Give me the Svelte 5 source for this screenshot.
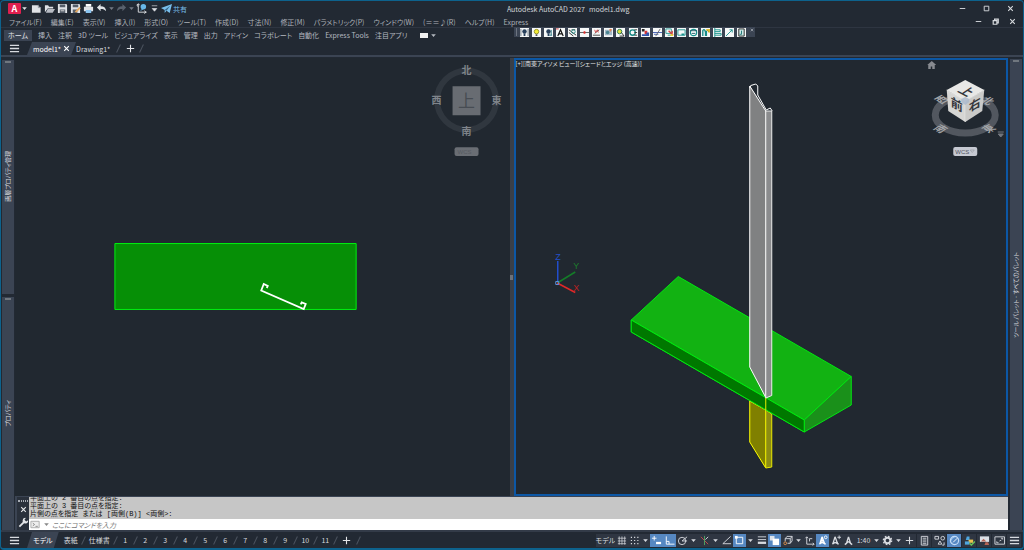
<script>
    const menus = ["ファイル(F)", "編集(E)", "表示(V)", "挿入(I)", "形式(O)", "ツール(T)", "作成(D)", "寸法(N)", "修正(M)", "パラメトリック(P)", "ウィンドウ(W)", "(＝＝♪(R)", "ヘルプ(H)", "Express"];
    const ribbonTabs = ["ホーム", "挿入", "注釈", "3D ツール", "ビジュアライズ", "表示", "管理", "出力", "アドイン", "コラボレート", "自動化", "Express Tools", "注目アプリ"];
    const layouts = ["表紙", "仕様書", "1", "2", "3", "4", "5", "6", "7", "8", "9", "10", "11"];

    // icon bodies on a 12 x 12 grid, currentColor is the light grey of the bars
    const icons = {
        fresh: '<path d="M1 2.500h6.500l3 3v5h-9.500z" fill="currentColor"/><path d="M8 2v3h3" fill="none" stroke="#8b9099"/>',
        open: '<path d="M1 10V2.500h3.500l1 1.500H10v2H4z" fill="currentColor"/><path d="M4 6.500h8L9.500 10.500H2z" fill="#b8bcc4"/>',
        save: '<path d="M1 1h9l1 1v9H1z" fill="currentColor"/><path d="M3 1.500h6v3H3zM3 7h6v4H3z" fill="#555d69"/><path d="M4 8.500h4" stroke="#ddd"/>',
        saveas: '<path d="M1 1h9l1 1v9H1z" fill="currentColor"/><path d="M3 1.500h6v3H3zM3 7h5v4H3z" fill="#555d69"/><path d="M6 10l5-5" stroke="#e5a85d" stroke-width="2"/>',
        print: '<path d="M3 1h6v3H3z" fill="#fff"/><path d="M1 4h10v5H1z" fill="currentColor"/><path d="M3 7.500h6v3.500H3z" fill="#8ac4f0"/>',
        undo: '<path d="M1 5l4-4v2.500c4 0 6 2 6 5.500-1.500-2-3-2.500-6-2.500V9z" fill="currentColor"/>',
        redo: '<path d="M11 5L7 1v2.500C3 3.500 1 5.500 1 9c1.500-2 3-2.500 6-2.500V9z" fill="#59616d"/>',
        view: '<path d="M2.500 1v9h9M2 4l-1-2 1.500-1L4 2M9 8.500l2 1.500-2 1.500" fill="none" stroke="currentColor"/><circle cx="8" cy="4" r="3" fill="#68b7e8"/><path d="M5 8l3-1.500" stroke="#68b7e8"/>',
        plane: '<path d="M0 5.500L12 1 9.500 11 6 8.500 4 11V7.500z" fill="#78bdea"/><path d="M4 7.500L10 3 6 8.500" fill="#356384"/>',
        caret: '<path d="M3.500 4.500h5L6 7.500z" fill="currentColor"/>',
        custom: '<path d="M3 3h6M3.500 6h5L6 9z" fill="currentColor" stroke="currentColor" stroke-width=".7"/>',
        bars: '<path d="M1 2.500h10M1 6h10M1 9.500h10" stroke="currentColor" stroke-width="1.400"/>',
        plus: '<path d="M6 2v8M2 6h8" stroke="currentColor" stroke-width="1.200"/>',
        min: '<path d="M3 6h6" stroke="currentColor"/>',
        max: '<path d="M3.500 3.500h5v5h-5z" fill="none" stroke="currentColor"/>',
        restore: '<path d="M3.500 5h4v4h-4zM5 5V3.500h4v4H7.500" fill="none" stroke="currentColor" stroke-width="1.300"/>',
        close: '<path d="M3.500 3.500l5 5M8.500 3.500l-5 5" stroke="currentColor" stroke-width="1.200"/>',
        wrench: '<path d="M1.500 10.500L7 5" stroke="currentColor" stroke-width="2"/><path d="M11 3.500L9 5 7 3l1.500-2a3 3 0 1 0 2.500 2.500" fill="currentColor"/>',
        prompt: '<path d="M1 2.500h9v7H1z" fill="#eee" stroke="#aaa"/><path d="M3 4.500l2 1.500-2 1.500M6 8h2.500" fill="none" stroke="#888"/>',
        grid: '<path d="M3.500 1.500v9M6.500 1.500v9M9.500 1.500v9M2 3.500h9M2 6.500h9M2 9.500h9" stroke="currentColor" stroke-width=".8"/>',
        dots: '<path d="M2 2.500h9M2 6h9M2 9.500h9" stroke="currentColor" stroke-width="1.300" stroke-dasharray="1.300 2.200"/>',
        dyn: '<path d="M3.500 1v5M1 3.500h5" stroke="currentColor"/><path d="M5.500 7.500H11v2.500H5.500z" fill="currentColor"/>',
        ortho: '<path d="M2.500 1.500v8.500h9M2.500 7h3v3" fill="none" stroke="currentColor"/>',
        polar: '<circle cx="5.500" cy="6.500" r="4" fill="none" stroke="currentColor"/><path d="M11 2L5.500 6.500H11" fill="none" stroke="currentColor"/>',
        iso: '<path d="M2 2l8 8" stroke="#c84b4b"/><path d="M6 1v10" stroke="#51a766"/><path d="M7 5l3-3" stroke="currentColor"/>',
        angle: '<path d="M10.500 1.500L2 9.500h9" fill="none" stroke="currentColor"/>',
        osnap: '<path d="M2.500 2.500h7v7h-7z" fill="none" stroke="currentColor"/><path d="M1 1h3v3H1z" fill="currentColor"/>',
        weight: '<path d="M2 2h9M2 5h9" stroke="currentColor"/><path d="M2 8.500h9" stroke="currentColor" stroke-width="2.500"/>',
        cycle: '<path d="M1 1h5v5H1z" fill="#dde3ea"/><path d="M4 4h7v7H4z" fill="currentColor"/>',
        cube: '<path d="M3.500 4l2-2.500H11v5L9 9H6M3.500 7V4H9v5M9 4l2-2.500" fill="none" stroke="currentColor"/><circle cx="3.500" cy="9" r="1.500" fill="none" stroke="#df914c"/>',
        ucs: '<path d="M3 2v8h8M1.500 3.500L3 2l1.500 1.500M9.500 8.500L11 10l-1.500 1.500M6 7V4h3" fill="none" stroke="currentColor"/>',
        anno: '<path d="M5.500 2L3 10M5.500 2L8.500 10M5.500 5v3L2.500 10M5.500 8l4 2" stroke="currentColor" stroke-width="1.500"/><circle cx="9.500" cy="2.500" r="1.500" fill="none" stroke="currentColor"/>',
        annoadd: '<path d="M5.500 2L3 10M5.500 2L8.500 10M5.500 8l-3 2M5.500 8l4 2" stroke="currentColor" stroke-width="1.500"/><path d="M8 2.500h4M10 .5v4" stroke="currentColor"/>',
        annoscale: '<path d="M6 2L3.500 10M6 2L8.500 10M6 7l-4 3.500M6 7l4 3.500" stroke="currentColor" stroke-width="1.500"/>',
        gear: '<circle cx="6" cy="6" r="3" fill="none" stroke="currentColor" stroke-width="2"/><circle cx="6" cy="6" r="4.500" fill="none" stroke="currentColor" stroke-width="1.500" stroke-dasharray="1.800 1.730"/>',
        list: '<path d="M2.500 1.500h7v9.500h-7zM4 3.500h4M4 5.500h4M4 7.500h4M4 9.500h4" fill="none" stroke="currentColor"/>',
        shapes: '<path d="M1 1.500h4v3H1z" fill="none" stroke="currentColor"/><circle cx="9.500" cy="3.500" r="2" fill="none" stroke="currentColor"/><path d="M4.500 10l2-3.500 2 3.500zM9 11h2V8" fill="none" stroke="currentColor"/>',
        gauge: '<circle cx="6" cy="6" r="4.500" fill="none" stroke="#c4dcf6" stroke-width="1.300"/><path d="M4.500 8L9 3.500" stroke="currentColor"/><path d="M2.500 6A3.500 3.500 0 0 1 6 2.500" fill="none" stroke="#a6d0f7"/>',
        print3d: '<path d="M3 1.500h3v4H2z" fill="#4fa7df"/><path d="M5 5h5v3.500H5z" fill="#eac14f"/><path d="M1 7h5v3.500H1z" fill="#4fa7df"/><path d="M6 9l2 2 4-4" fill="none" stroke="#65bf59" stroke-width="1.500"/>',
        picture: '<path d="M1 1.500h10v6H1z" fill="#dbe0e7"/><path d="M2 7l3-3 3 3M6 11l1-3h3l1 3z" fill="#b66455"/>',
        full: '<path d="M1 2h10.500v8H1z" fill="none" stroke="currentColor"/><path d="M3 7v1.500h2M9.500 5V3.500H7.500M6 6.500l2-1" fill="none" stroke="currentColor"/>'
    };

    const quick = ["fresh", "open", "save", "saveas", "print", "undo", "caret", "redo", "caret", "view", "custom"];
    const drafting = ["grid", "dots", "caret", "dyn*", "ortho*", "polar", "caret", "iso", "caret", "angle", "osnap*", "caret", "weight", "cycle*", "cube", "caret", "ucs", "anno*", "annoadd", "annoscale"]
        .map((s) => ({ name: s.replace("*", ""), on: s.endsWith("*") }));
    const display = ["list", "shapes", "gauge*", "print3d", "picture", "full", "bars"]
        .map((s) => ({ name: s.replace("*", ""), on: s.endsWith("*") }));

    const bulb = '<circle cx="5" cy="4" r="2.500" fill="#28405c"/><path d="M5 6v3" stroke="#28405c" stroke-width="2"/>';
    const tools = [
        bulb + '<path d="M1 1v8M9 1v8" stroke="#687480"/>',
        '<circle cx="5" cy="4" r="2.500" fill="#f5ee35" stroke="#948d23"/><path d="M5 7v2" stroke="#555" stroke-width="2"/>',
        bulb + '<path d="M8 2v6M6 8h3" stroke="#247480"/>',
        '<path d="M2 9L5 2l3 7M3 6.500h4" fill="none" stroke="#111" stroke-width="1.300"/><path d="M0 1h3" stroke="#c33"/>',
        '<path d="M1 2l8 6M1 5l5 4M4 2h4" stroke="#222"/><circle cx="6" cy="4" r="2" fill="none" stroke="#218c87"/>',
        '<path d="M0 5h10" stroke="#555"/><path d="M4 3.500h2v3H4z" fill="#e32d2d"/>',
        '<path d="M1 8h8M3 6l5-4" stroke="#444"/><path d="M3 2l1 3 2-3 1 3" fill="none" stroke="#d54343"/>',
        '<path d="M1 2h8v6H1z" fill="#a4b9c7"/><circle cx="4" cy="5" r="2" fill="#4a8491"/><path d="M7 1v3M6 2h3" stroke="#e7763b"/>',
        '<circle cx="4" cy="4" r="2.500" fill="#dfe33e" stroke="#277c55"/><path d="M6 5l3 4H4" fill="none" stroke="#222"/>',
        '<circle cx="4" cy="5" r="3" fill="none" stroke="#158984" stroke-width="1.500"/><path d="M6 2h3M6 5h3M6 8h3" stroke="#333"/>',
        '<path d="M1 1h3v3H1z" fill="#222"/><path d="M4 3h3v4H4z" fill="#db3434"/><path d="M6 5h3v4H1V7h5z" fill="#3454ab"/>',
        '<path d="M0 5h10M1 7h5" stroke="#3d59af"/><path d="M8 1L3 9" stroke="#666"/>',
        '<path d="M1 1h6v5H1zM3 8h4" fill="none" stroke="#249792"/><path d="M4 3l5 5M8 3v3" stroke="#d54141" stroke-width="1.500"/><path d="M6 7h3v2H6z" fill="#e7d432"/>',
        '<path d="M1 2h8v6H1z" fill="none" stroke="#16918c"/><path d="M5 7h3" stroke="#16918c" stroke-width="2"/>',
        '<circle cx="5" cy="5" r="3.500" fill="none" stroke="#16918c" stroke-width="1.300"/><path d="M1 3h8M3 6h4" stroke="#225a66"/>',
        '<path d="M2 9V3q2-3 3 2v4M6 3v6" fill="none" stroke="#168c88" stroke-width="1.500"/><path d="M6 2h3v3" stroke="#e5c12e" stroke-width="2"/>',
        '<path d="M2 0v10M2 2h6v2H2M2 6h7v2H2" fill="none" stroke="#138e88"/>',
        '<path d="M1 9L8 2M5 2h3v3" fill="none" stroke="#168f8b"/>',
        '<path d="M2 1h6v8H2z" fill="#cce8e6" stroke="#222"/><path d="M5 3v4H3" fill="none" stroke="#15716f"/>'
    ];
</script>

{#snippet icon(name)}
    <svg class="icon" viewBox="0 0 12 12" aria-hidden="true">{@html icons[name]}</svg>
{/snippet}

<div class="window">
    <header>
        <div class="titlebar">
            <div class="quick">
                <button class="logo" aria-label="Application menu">A</button>
                <button class="arrow" aria-label="Application options">{@render icon("caret")}</button>
                {#each quick as name}
                    <button class:arrow={name === "caret"} class:dim={name === "caret"} aria-label={name}>{@render icon(name)}</button>
                {/each}
                <button class="share">{@render icon("plane")}共有</button>
            </div>
            <div class="title"><span>Autodesk AutoCAD 2027</span><span>model1.dwg</span></div>
            <div class="controls">
                {#each ["min", "max", "close"] as name}
                    <button aria-label={name}>{@render icon(name)}</button>
                {/each}
            </div>
        </div>

        <div class="menubar">
            <nav>
                {#each menus as menu}<button>{menu}</button>{/each}
            </nav>
            <div class="controls inner">
                {#each ["min", "restore", "close"] as name}
                    <button aria-label={name}>{@render icon(name)}</button>
                {/each}
            </div>
        </div>

        <div class="ribbon">
            {#each ribbonTabs as tab, i}<button class:current={i === 0}>{tab}</button>{/each}
            <button class="panel" aria-label="Ribbon display"><i></i>{@render icon("caret")}</button>
        </div>

        <div class="toolbar">
            <span class="handle"></span>
            {#each tools as tool, i}
                <button aria-label="Express tool {i + 1}"><svg viewBox="0 0 10 10">{@html tool}</svg></button>
            {/each}
            <button class="shut" aria-label="Close toolbar">{@render icon("close")}</button>
        </div>

        <div class="files">
            <button class="burger" aria-label="Drawings">{@render icon("bars")}</button>
            <button class="tab active"><span>model1*</span>{@render icon("close")}</button>
            <button class="tab drawing">Drawing1*</button>
            <i class="slash"></i>
            <button class="new" aria-label="New drawing">{@render icon("plus")}</button>
            <i class="slash"></i>
        </div>
    </header>

    <main>
        <aside class="left">
            <section><span>画層プロパティ管理</span></section>
            <section><span>プロパティ</span></section>
        </aside>

        <div class="work">
            <div class="views">
                <div class="view">
                    <svg viewBox="15 58 495 438" role="img" aria-label="Top view">
                        <path d="M115 243.500h241.500v66H115z" fill="#068f06" stroke="#00f010" />
                        <path d="M267 288l1-2-4-2-2.500 6.500 42.500 18.500 2-5-4-1.500-1 2" fill="none" stroke="#fff" stroke-width="1.800" />
                        <circle cx="467" cy="100" r="29.500" fill="none" stroke="#30373f" stroke-width="6" />
                        <path d="M453 86h28v29h-28z" fill="#686c72" />
                        <g class="compass">
                            <text x="467" y="74">北</text>
                            <text x="467" y="135">南</text>
                            <text x="437" y="104">西</text>
                            <text x="497" y="104">東</text>
                        </g>
                        <text class="top" x="467" y="107">上</text>
                        <rect x="455" y="147" width="24" height="9" rx="2" fill="#6a6e74" />
                        <text class="wcs off" x="458" y="154">WCS</text>
                    </svg>
                </div>
                <div class="splitter"><i></i></div>
                <div class="view focused">
                    <svg viewBox="516 60 490 434" role="img" aria-label="Southeast isometric view">
                        <g stroke="#00e810" stroke-width="1" stroke-linejoin="round">
                            <path d="M678 276.500l173 100-47 43.500-173-100z" fill="#12b212" />
                            <path d="M631 320l173 100v12L631 332z" fill="#007800" />
                            <path d="M804 420l47-43.500V405l-47 27z" fill="#1a901a" />
                        </g>
                        <path d="M749.500 401l16 9v58l-16-26z" fill="#808000" stroke="#ff0" />
                        <path d="M765.500 410l6 4v53l-6 1z" fill="#8c8c14" stroke="#e8e800" />
                        <path d="M804 420v12L631 332v-12z" fill="#007800" stroke="#00e810" stroke-linejoin="round" />
                        <path d="M765.500 398v12" stroke="#e8f000" />
                        <path d="M749.500 86l16 25v286.500l-16-30.500z" fill="#808182" stroke="#fff" />
                        <path d="M765.500 111h6v284.500l-6 2.500z" fill="#8b8c8e" stroke="#eee" />
                        <path d="M749.500 88l1-2.500 5-1.500 2 2v9l8.500 15 4-2 2 3" fill="none" stroke="#fff" />
                        <g fill="none">
                            <path d="M557.500 283v-22" stroke="#214dcc" stroke-width="1.500" />
                            <path d="M557 283l18-11" stroke="#147c28" stroke-width="1.500" />
                            <path d="M557 283l18 9.500" stroke="#e02828" stroke-width="1.500" />
                            <path d="M555.500 281.500h3v3h-3z" stroke="#5b91df" />
                        </g>
                        <text class="axis z" x="555" y="260">Z</text>
                        <text class="axis y" x="573" y="269">Y</text>
                        <text class="axis x" x="573" y="291">X</text>

                        <path d="M927 65l4.500-4 4.500 4h-1.500v4H932v-2.500h-1.500V69H928v-4z" fill="#888b90" />
                        <ellipse cx="965" cy="115" rx="30" ry="18" fill="none" stroke="#52575f" stroke-width="7" />
                        <g class="ring">
                            <text transform="translate(945 102) rotate(-28) skewX(28)">西</text>
                            <text transform="translate(984 103) rotate(28) skewX(-28)">北</text>
                            <text transform="translate(937 131) rotate(28) skewX(-28)">南</text>
                            <text transform="translate(992 131) rotate(-28) skewX(28)">東</text>
                        </g>
                        <path d="M965 80l19 10-19 11-18.500-11z" fill="#e8e8e6" />
                        <path d="M946.500 90L965 101v21l-17-11z" fill="#d6d6d4" />
                        <path d="M984 90l-19 11v21l17-11z" fill="#cacac8" />
                        <path d="M946.500 90L965 101l19-11M965 101v21" fill="none" stroke="#f4f4f2" stroke-width=".7" />
                        <path d="M961 99l4-2 4 2v3l-4 3-4-3z" fill="#a9b8cc" opacity=".8" />
                        <g class="face">
                            <text transform="translate(962 94) rotate(28) skewX(-28)">上</text>
                            <text transform="translate(956.500 109) skewY(30)">前</text>
                            <text transform="translate(974.500 109) skewY(-30)">右</text>
                        </g>
                        <path d="M997.500 132h6M998 134h5l-2.500 3z" fill="#73777e" stroke="#73777e" />
                        <rect x="953" y="147" width="24" height="9" rx="2" fill="#c6c9d2" />
                        <text class="wcs" x="955" y="154">WCS</text>
                        <path d="M970 150h4l-2 2.500z" fill="none" stroke="#9a9da6" stroke-width=".7" />
                    </svg>
                    <div class="caption">[+][南東アイソメ ビュー][シェードとエッジ (高速)]</div>
                </div>
            </div>

            <div class="command">
                <div class="grip">
                    <i></i>
                    <button aria-label="Close command line">{@render icon("close")}</button>
                    <button aria-label="Customize">{@render icon("wrench")}</button>
                </div>
                <div class="console">
                    <div class="history">
                        <p>平面上の 2 番目の点を指定:</p>
                        <p>平面上の 3 番目の点を指定:</p>
                        <p>片側の点を指定 または [両側(B)] &lt;両側&gt;:</p>
                    </div>
                    <div class="entry">
                        {@render icon("prompt")}{@render icon("caret")}
                        <input aria-label="Command" placeholder="ここにコマンドを入力" />
                    </div>
                </div>
            </div>
        </div>

        <aside class="right">
            <section><span>ツール パレット - すべてのパレット</span></section>
        </aside>
    </main>

    <footer>
        <div class="layouts">
            <button class="burger" aria-label="Layouts">{@render icon("bars")}</button>
            <button class="tab active">モデル</button>
            {#each layouts as layout}
                <button class="sheet">{layout}</button>
                <i class="slash"></i>
            {/each}
            <button class="new" aria-label="New layout">{@render icon("plus")}</button>
            <i class="slash"></i>
        </div>
        <div class="status">
            <button class="space">モデル</button>
            {#each drafting as item}
                <button class:arrow={item.name === "caret"} class:on={item.on} aria-label={item.name}>{@render icon(item.name)}</button>
            {/each}
            <button class="scale">1:40</button>
            <button class="arrow" aria-label="Scale list">{@render icon("caret")}</button>
            <button aria-label="Workspace">{@render icon("gear")}</button>
            <button class="arrow" aria-label="Workspace list">{@render icon("caret")}</button>
            <button aria-label="Monitor">{@render icon("plus")}</button>
            {#each display as item}
                <button class="wide" class:on={item.on} aria-label={item.name}>{@render icon(item.name)}</button>
            {/each}
        </div>
    </footer>
</div>

<style>
    :global(body) {
        background: #222933;
    }
    .window {
        box-sizing: border-box;
        height: 100vh;
        display: flex;
        flex-direction: column;
        border: 1px solid #0d628d;
        border-width: 1px 1px 2px 1px;
        border-radius: 4px;
        background: #222933;
        color: #c3c7cd;
        font: 7px/10px "Noto Sans CJK JP", sans-serif;
        font-feature-settings: "palt";
        overflow: hidden;
    }
    button {
        display: flex;
        align-items: center;
        justify-content: center;
        flex: none;
        padding: 0;
        border: 0;
        background: none;
        color: inherit;
        font: inherit;
        font-feature-settings: inherit;
        white-space: nowrap;
    }
    .icon {
        display: block;
        flex: none;
        width: 11px;
        height: 11px;
    }
    header {
        position: relative;
        flex: none;
    }
    .titlebar {
        display: grid;
        grid-template-columns: 49.5% 1fr auto;
        align-items: center;
        height: 15px;
    }
    .quick {
        display: flex;
        align-items: center;
        padding-left: 7px;
        color: #dfe2e6;
    }
    .quick button {
        width: 13px;
    }
    .quick .arrow {
        width: 7px;
    }
    .quick .dim {
        color: #737a85;
    }
    .quick .logo {
        height: 11px;
        border-radius: 1px;
        background: #e01f4f;
        color: #fff;
        font-size: 9px;
        font-weight: bold;
    }
    .quick .logo + .arrow {
        margin-right: 2px;
    }
    .quick .share {
        width: auto;
        gap: 1px;
        color: #78bdea;
    }
    .title {
        display: flex;
        gap: 4px;
        color: #d2d5da;
    }
    .controls {
        display: flex;
        gap: 13px;
        padding-right: 7px;
        color: #d8dbdf;
    }
    .controls.inner {
        gap: 6px;
        padding-right: 5px;
    }
    .menubar {
        display: flex;
        justify-content: space-between;
        align-items: center;
        height: 11px;
        border-bottom: 1px solid #2e3541;
        color: #adb1b8;
    }
    .menubar nav {
        display: flex;
        gap: 9px;
        padding-left: 8px;
    }
    .ribbon {
        display: flex;
        align-items: center;
        gap: 6px;
        height: 14px;
        padding-left: 3px;
        color: #b5b9c0;
    }
    .ribbon .current {
        height: 11px;
        padding: 0 4px;
        background: #3b4453;
        color: #e2e5e9;
    }
    .ribbon .panel {
        margin-left: 6px;
    }
    .panel i {
        width: 8px;
        height: 5px;
        background: #f1f1f1;
    }
    .toolbar {
        position: absolute;
        left: 50.2%;
        top: 26px;
        display: flex;
        justify-content: space-between;
        box-sizing: border-box;
        width: 23.6%;
        height: 10px;
        padding-left: 2px;
        background: #3b4453;
    }
    .handle {
        width: 1px;
        margin: 1px 0;
        background: #6d7480;
    }
    .toolbar svg {
        display: block;
        width: 9px;
        height: 9px;
        background: #f6f8f8;
    }
    .toolbar .shut {
        align-items: flex-start;
        width: 6px;
    }
    .toolbar .shut :global(svg) {
        width: 6px;
        height: 6px;
        background: none;
    }
    .files,
    .layouts {
        display: flex;
        align-items: center;
    }
    .files {
        height: 13px;
        border-bottom: 2px solid #3b4453;
        color: #d7dadf;
    }
    .burger {
        width: 26px;
    }
    .tab {
        align-self: stretch;
    }
    .tab.active {
        padding: 0 6px;
        background: #3b4453;
        color: #fff;
        clip-path: polygon(5px 0, 100% 0, calc(100% - 5px) 100%, 0 100%);
    }
    .files .tab.active {
        padding-right: 4px;
    }
    .drawing {
        padding: 0 8px 0 0;
    }
    .new {
        width: 22px;
        color: #e4e6e9;
    }
    .slash {
        width: 1px;
        height: 9px;
        background: #4b525e;
        transform: rotate(25deg);
    }
    main {
        flex: 1;
        min-height: 0;
        display: flex;
        padding-top: 1px;
    }
    aside {
        flex: none;
        display: flex;
        flex-direction: column;
        gap: 3px;
        box-sizing: border-box;
        padding: 2px 1px 0;
        font-size: 6px;
    }
    .left {
        width: 14px;
    }
    .right {
        width: 15px;
        padding: 1px 1px 0 2px;
    }
    aside section {
        position: relative;
        flex: 1;
        display: flex;
        align-items: center;
        justify-content: center;
        background: #3b4453;
        color: #d6d9de;
    }
    aside section::before {
        content: "";
        position: absolute;
        top: 1px;
        left: 3px;
        width: 6px;
        height: 2px;
        background: #70777f;
    }
    aside span {
        writing-mode: vertical-rl;
        text-orientation: sideways;
        transform: rotate(180deg);
        white-space: nowrap;
    }
    .work {
        flex: 1;
        min-width: 0;
        display: flex;
        flex-direction: column;
    }
    .views {
        flex: 1;
        min-height: 0;
        display: grid;
        grid-template-columns: minmax(0, 1fr) 4px minmax(0, 1fr);
        grid-template-rows: minmax(0, 1fr);
    }
    .view {
        position: relative;
        min-width: 0;
        background: #212830;
    }
    .view svg {
        display: block;
        width: 100%;
        height: 100%;
    }
    .focused {
        box-sizing: border-box;
        border: 2px solid #0c57a5;
    }
    .splitter {
        display: flex;
        align-items: center;
        background: #3a3f47;
    }
    .splitter i {
        width: 3px;
        height: 5px;
        background: #6d727a;
    }
    .caption {
        position: absolute;
        left: 0;
        top: 0;
        font-size: 6px;
        line-height: 8px;
        color: #e6e8ea;
    }
    text {
        font-family: "Noto Sans CJK JP", sans-serif;
    }
    .compass {
        fill: #80858b;
        font-size: 10px;
        font-weight: bold;
        text-anchor: middle;
    }
    .top {
        fill: #474c53;
        font-size: 17px;
        text-anchor: middle;
    }
    .wcs {
        fill: #50545e;
        font: 6px "Liberation Sans", sans-serif;
    }
    .wcs.off {
        fill: #575b62;
    }
    .ring {
        fill: #a3a5a8;
        font-size: 10px;
        font-weight: bold;
        text-anchor: middle;
    }
    .face {
        fill: #34373c;
        font-size: 12px;
        font-weight: bold;
        text-anchor: middle;
    }
    .axis {
        font: 9px "Liberation Sans", sans-serif;
    }
    .x {
        fill: #b22;
    }
    .y {
        fill: #1c7c2c;
    }
    .z {
        fill: #2450c8;
    }
    .command {
        flex: none;
        display: flex;
        height: 33px;
        padding: 1px 0 0 2px;
        background: #3b4453;
    }
    .grip {
        display: flex;
        flex-direction: column;
        align-items: center;
        gap: 2px;
        width: 12px;
        padding-top: 3px;
        background: #2a313c;
        color: #e5e7ea;
    }
    .grip i {
        flex: none;
        width: 10px;
        height: 2px;
        border-block: 1px dotted #a8adb5;
        box-sizing: border-box;
    }
    .console {
        flex: 1;
        min-width: 0;
        display: flex;
        flex-direction: column;
    }
    .history {
        flex: 1;
        min-height: 0;
        display: flex;
        flex-direction: column;
        justify-content: flex-end;
        padding-bottom: 1px;
        overflow: hidden;
        background: #c6c6c6;
        color: #111;
        font-family: "Liberation Mono", "Noto Sans CJK JP", monospace;
        line-height: 8px;
    }
    .history p {
        margin: 0 0 0 1px;
    }
    .entry {
        flex: none;
        display: flex;
        align-items: center;
        height: 11px;
        padding-left: 1px;
        background: #fff;
        color: #888;
    }
    .entry input {
        flex: 1;
        min-width: 0;
        padding: 0;
        border: 0;
        outline: 0;
        background: none;
        font: italic 7px/10px "Noto Sans CJK JP", sans-serif;
        font-feature-settings: "palt";
    }
    .entry input::placeholder {
        color: #777;
    }
    footer {
        flex: none;
        display: flex;
        justify-content: space-between;
        align-items: center;
        height: 16px;
        border-top: 2px solid #333b48;
        color: #d7dadf;
    }
    .layouts {
        align-self: stretch;
    }
    .sheet {
        min-width: 19px;
        padding: 0 5px;
        box-sizing: border-box;
    }
    .status {
        display: flex;
        align-items: center;
        height: 13px;
        padding-right: 2px;
    }
    .status button {
        width: 13px;
        height: 13px;
        background: #2f3642;
    }
    .status .arrow {
        width: 9px;
    }
    .status .space {
        width: 19px;
    }
    .status .scale {
        width: 17px;
    }
    .status .wide {
        width: 15px;
        border-left: 1px solid #222933;
    }
    .status .on {
        background: #5688c2;
        color: #fff;
    }
</style>
